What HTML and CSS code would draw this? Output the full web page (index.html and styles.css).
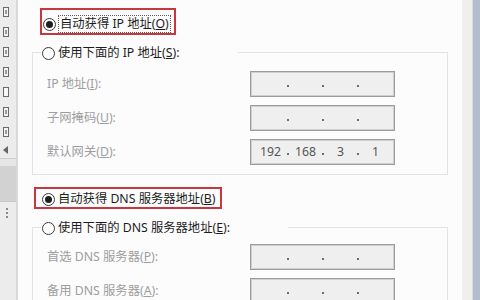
FILE: index.html
```
<!DOCTYPE html>
<html>
<head>
    <title>Internet 协议版本 4 (TCP/IPv4) 属性</title>
    <link rel="stylesheet" href="styles.css">
</head>
<body>
<div class="window">
    <div class="side">
        <div class="side-icons">
            <span class="ico"></span>
            <span class="ico"></span>
            <span class="ico"></span>
            <span class="ico"></span>
            <span class="ico empty"></span>
            <span class="ico"></span>
            <span class="ico"></span>
            <span class="arrow"></span>
        </div>
        <div class="side-band"></div>
        <div class="side-band2"></div>
        <div class="side-dots"><i></i><i></i><i></i></div>
    </div>

    <div class="main">
        <div class="pick pick-ip">
            <span class="radio on"></span>
            <span class="focus">自动获得 IP 地址(<u>O</u>)</span>
        </div>

        <div class="group">
            <div class="legend">
                <span class="radio"></span>
                <span class="legend-text">使用下面的 IP 地址(<u>S</u>):</span>
            </div>
            <div class="rows">
                <div class="row">
                    <span class="lbl">IP 地址(<u>I</u>):</span>
                    <div class="ip">
                        <span class="seg"></span><span class="dot"></span>
                        <span class="seg"></span><span class="dot"></span>
                        <span class="seg"></span><span class="dot"></span>
                        <span class="seg"></span>
                    </div>
                </div>
                <div class="row">
                    <span class="lbl">子网掩码(<u>U</u>):</span>
                    <div class="ip">
                        <span class="seg"></span><span class="dot"></span>
                        <span class="seg"></span><span class="dot"></span>
                        <span class="seg"></span><span class="dot"></span>
                        <span class="seg"></span>
                    </div>
                </div>
                <div class="row">
                    <span class="lbl">默认网关(<u>D</u>):</span>
                    <div class="ip">
                        <span class="seg">192</span><span class="dot"></span>
                        <span class="seg">168</span><span class="dot"></span>
                        <span class="seg">3</span><span class="dot"></span>
                        <span class="seg">1</span>
                    </div>
                </div>
            </div>
        </div>

        <div class="pick pick-dns">
            <span class="radio on"></span>
            <span class="pick-text">自动获得 DNS 服务器地址(<u>B</u>)</span>
        </div>

        <div class="group group-dns">
            <div class="legend">
                <span class="radio"></span>
                <span class="legend-text">使用下面的 DNS 服务器地址(<u>E</u>):</span>
            </div>
            <div class="rows rows-dns">
                <div class="row">
                    <span class="lbl">首选 DNS 服务器(<u>P</u>):</span>
                    <div class="ip">
                        <span class="seg"></span><span class="dot"></span>
                        <span class="seg"></span><span class="dot"></span>
                        <span class="seg"></span><span class="dot"></span>
                        <span class="seg"></span>
                    </div>
                </div>
                <div class="row">
                    <span class="lbl">备用 DNS 服务器(<u>A</u>):</span>
                    <div class="ip">
                        <span class="seg"></span><span class="dot"></span>
                        <span class="seg"></span><span class="dot"></span>
                        <span class="seg"></span><span class="dot"></span>
                        <span class="seg"></span>
                    </div>
                </div>
            </div>
        </div>
    </div>

    <div class="edge"></div>
    <div class="edge-blue"></div>
</div>
</body>
</html>
```

FILE: styles.css
```
body {
    margin: 0;
    font-family: "Noto Sans", "Noto Sans CJK SC", sans-serif;
    font-size: 12.3px;
}

.window {
    display: flex;
    width: 480px;
    height: 300px;
    overflow: hidden;
}

/* strip of the window behind */
.side {
    width: 16px;
    background: #ececec;
    border-right: 2px solid #d9d9d9;
    display: flex;
    flex-direction: column;
}

.side-icons {
    display: flex;
    flex-direction: column;
    padding-top: 2px;
}

.ico {
    height: 20px;
    display: flex;
    align-items: center;
}

.ico::before {
    content: "";
    width: 4px;
    height: 8px;
    margin-left: 3px;
    border: 1px solid #6a6a6a;
    background: linear-gradient(#999 0 0) center / 2px 4px no-repeat, #f4f4f4;
}

.ico.empty::before {
    background: #f8f8f8;
}

.arrow {
    height: 16px;
    display: flex;
    align-items: center;
    border-bottom: 1px solid #cfcfcf;
}

.arrow::before {
    content: "";
    margin-left: 3px;
    border-top: 4px solid transparent;
    border-bottom: 4px solid transparent;
    border-right: 5px solid #666;
}

.side-band {
    height: 7px;
    background: #e6e6e6;
}

.side-band2 {
    height: 35px;
    background: #d2d2d2;
    border-bottom: 1px solid #c8c8c8;
}

.side-dots {
    display: flex;
    flex-direction: column;
    gap: 2px;
    padding: 6px 0 0 6px;
}

.side-dots i {
    width: 2px;
    height: 2px;
    background: #8a8a8a;
}

/* dialog body */
.main {
    width: 444px;
    background: #fcfcfd;
    display: flex;
    flex-direction: column;
    align-items: flex-start;
    color: #1c1c1c;
}

.radio {
    width: 11px;
    height: 11px;
    border: 1px solid #3a3a3a;
    border-radius: 50%;
    background: #fff;
    flex: none;
    display: flex;
    align-items: center;
    justify-content: center;
}

.radio.on::before {
    content: "";
    width: 7px;
    height: 7px;
    border-radius: 50%;
    background: #1e1e1e;
}

.pick {
    display: flex;
    align-items: center;
    box-sizing: border-box;
    border: 2px solid #c8363f;
    line-height: 16px;
}

.pick-ip {
    margin: 8px 0 0 22px;
    height: 27px;
    padding: 5px 3px 0 1px;
}

.focus {
    margin-left: 2px;
    padding: 0 1px;
    border: 1px dotted #5a5a5a;
}

.pick-dns {
    margin: 12px 0 0 16px;
    height: 25px;
    padding: 2px 4px 0 6px;
}

.pick-text {
    margin-left: 3px;
}

.group {
    margin: 17px 0 0 14px;
    width: 416px;
    box-sizing: border-box;
    border: 1px solid #e3e3e5;
    padding-bottom: 9px;
}

.group-dns {
    margin-top: 18px;
    padding-bottom: 30px;
}

.legend {
    display: flex;
    align-items: center;
    width: fit-content;
    height: 18px;
    margin: -9px 0 0 8px;
    padding: 0 58px 0 1px;
    background: #fcfcfd;
    line-height: 16px;
}

.legend-text {
    margin-left: 3px;
}

.rows {
    display: flex;
    flex-direction: column;
    gap: 8px;
    padding: 9px 0 0 14px;
}

.rows-dns {
    padding-top: 7px;
}

.row {
    display: flex;
    align-items: center;
    height: 26px;
}

.lbl {
    width: 203px;
    color: #9e9e9e;
    line-height: 16px;
}

.ip {
    width: 145px;
    height: 26px;
    box-sizing: border-box;
    border: 1px solid #9c9c9c;
    box-shadow: inset 0 0 0 1px #cfcfcf;
    background: #efefef;
    display: flex;
    align-items: center;
    padding-left: 3px;
    color: #555;
}

.seg {
    width: 33px;
    text-align: center;
    line-height: 16px;
}

.dot {
    width: 2px;
    height: 2px;
    margin-top: 3px;
    background: #6e6e6e;
}

.edge {
    width: 10px;
    background: #efefeb;
    border-right: 1px solid #dcdcd8;
}

.edge-blue {
    flex: 1;
    background: #b2bdd0;
}
```
